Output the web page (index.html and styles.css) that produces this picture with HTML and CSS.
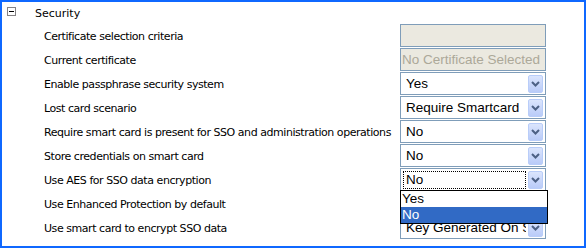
FILE: index.html
```html
<!DOCTYPE html>
<html>
<head>
<meta charset="UTF-8">
<title>Security settings</title>
<link rel="stylesheet" href="styles.css">
</head>
<body>
<div class="panel">
  <div class="group-head">
    <span class="toggle"><span class="toggle-bar"></span></span>
    <span class="group-title">Security</span>
  </div>
  <div class="rows">
    <div class="label">Certificate selection criteria</div>
    <div class="field disabled"></div>

    <div class="label">Current certificate</div>
    <div class="field disabled">No Certificate Selected</div>

    <div class="label">Enable passphrase security system</div>
    <div class="field select"><span class="value">Yes</span><span class="arrow"><svg width="9" height="6" viewBox="0 0 9 6"><path d="M1 1 L4.5 4.5 L8 1" fill="none" stroke="#4d6185" stroke-width="2"/></svg></span></div>

    <div class="label">Lost card scenario</div>
    <div class="field select"><span class="value">Require Smartcard</span><span class="arrow"><svg width="9" height="6" viewBox="0 0 9 6"><path d="M1 1 L4.5 4.5 L8 1" fill="none" stroke="#4d6185" stroke-width="2"/></svg></span></div>

    <div class="label">Require smart card is present for SSO and administration operations</div>
    <div class="field select"><span class="value">No</span><span class="arrow"><svg width="9" height="6" viewBox="0 0 9 6"><path d="M1 1 L4.5 4.5 L8 1" fill="none" stroke="#4d6185" stroke-width="2"/></svg></span></div>

    <div class="label">Store credentials on smart card</div>
    <div class="field select"><span class="value">No</span><span class="arrow"><svg width="9" height="6" viewBox="0 0 9 6"><path d="M1 1 L4.5 4.5 L8 1" fill="none" stroke="#4d6185" stroke-width="2"/></svg></span></div>

    <div class="label">Use AES for SSO data encryption</div>
    <div class="field select open">
      <span class="value focused">No</span><span class="arrow"><svg width="9" height="6" viewBox="0 0 9 6"><path d="M1 1 L4.5 4.5 L8 1" fill="none" stroke="#4d6185" stroke-width="2"/></svg></span>
      <div class="dropdown">
        <div class="option">Yes</div>
        <div class="option selected">No</div>
      </div>
    </div>

    <div class="label">Use Enhanced Protection by default</div>
    <div class="field select"><span class="value"></span></div>

    <div class="label">Use smart card to encrypt SSO data</div>
    <div class="field select"><span class="value">Key Generated On S</span><span class="arrow"><svg width="9" height="6" viewBox="0 0 9 6"><path d="M1 1 L4.5 4.5 L8 1" fill="none" stroke="#4d6185" stroke-width="2"/></svg></span></div>
  </div>
</div>
</body>
</html>
```
FILE: styles.css
```css
body {
  margin: 0;
  background: #fff;
}
.panel {
  width: 586px;
  height: 248px;
  box-sizing: border-box;
  border: 2px solid #0f68ff;
  background: #fff;
  font-family: "DejaVu Sans", sans-serif;
  font-size: 11px;
  color: #000;
}
.group-head {
  display: flex;
  align-items: center;
  height: 22px;
  padding-left: 5px;
}
.toggle {
  width: 7px;
  height: 7px;
  border: 1px solid #848284;
  display: flex;
  align-items: center;
  justify-content: center;
  margin-top: -4px;
}
.toggle-bar {
  width: 5px;
  height: 1px;
  background: #000;
}
.group-title {
  margin-left: 19px;
}
.rows {
  display: grid;
  grid-template-columns: 356px 146px;
  grid-auto-rows: 24px;
  padding-left: 42px;
}
.label {
  display: flex;
  align-items: center;
  letter-spacing: -0.45px;
  white-space: nowrap;
}
.field {
  position: relative;
  height: 23px;
  box-sizing: border-box;
  border: 1px solid #7f9db9;
  display: flex;
  align-items: center;
  font-family: "Liberation Sans", Arial, sans-serif;
  font-size: 13px;
}
.field.disabled {
  background: #ebe9e0;
  color: #aca899;
  padding-left: 1px;
  font-size: 13.5px;
  white-space: nowrap;
  overflow: hidden;
}
.select {
  padding: 0 2px 0 2px;
}
.value {
  flex: 1;
  height: 18px;
  line-height: 18px;
  padding-left: 3px;
  white-space: nowrap;
  overflow: hidden;
  font-size: 13.5px;
}
.value.focused {
  outline: 1px dotted #000;
  outline-offset: -1px;
}
.arrow {
  width: 15px;
  height: 18px;
  margin-left: 2px;
  box-sizing: border-box;
  border: 1px solid #b9cdf9;
  border-radius: 2px;
  background: linear-gradient(#dbe5fd, #b9cbf8);
  display: flex;
  align-items: center;
  justify-content: center;
}
.dropdown {
  position: absolute;
  left: -1px;
  top: 21px;
  width: 148px;
  box-sizing: border-box;
  border: 1px solid #000;
  background: #fff;
  z-index: 2;
}
.option {
  height: 16px;
  line-height: 16px;
  padding-left: 1px;
  font-size: 13.5px;
}
.option.selected {
  background: #316ac5;
  color: #fff;
}
```
